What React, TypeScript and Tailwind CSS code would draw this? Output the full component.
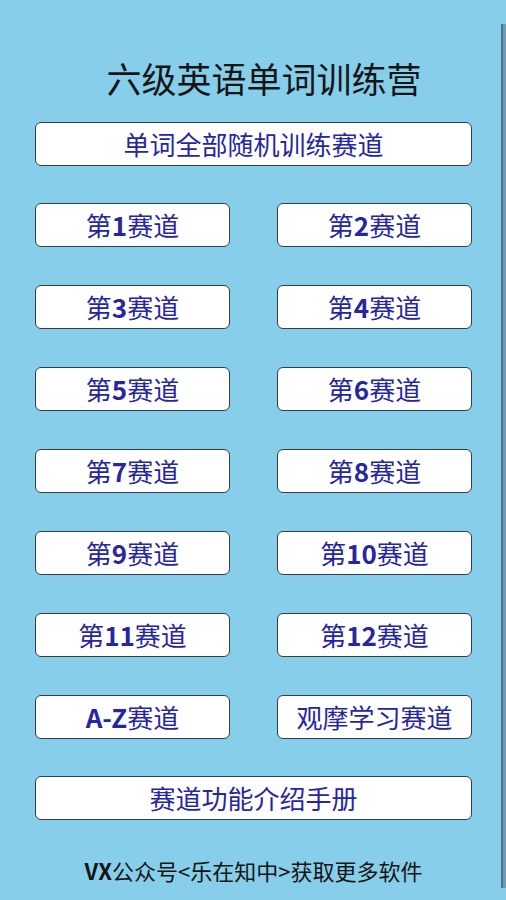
import React from "react";

const rows: [string, string][] = [
  ["第1赛道", "第2赛道"],
  ["第3赛道", "第4赛道"],
  ["第5赛道", "第6赛道"],
  ["第7赛道", "第8赛道"],
  ["第9赛道", "第10赛道"],
  ["第11赛道", "第12赛道"],
  ["A-Z赛道", "观摩学习赛道"],
];

function Label({ text }: { text: string }) {
  // latin letters and digits render heavier in the reference
  const parts = text.split(/([A-Za-z0-9-]+)/).filter(Boolean);
  return (
    <>
      {parts.map((p, i) =>
        /[A-Za-z0-9]/.test(p) ? (
          <span key={i} className="font-bold">
            {p}
          </span>
        ) : (
          <span key={i}>{p}</span>
        )
      )}
    </>
  );
}

function TrackButton({ text }: { text: string }) {
  return (
    <button className="h-[44px] w-full rounded-[6px] border-[1.5px] border-[#333d4b] bg-white text-[26px] leading-none text-[#2626a2]">
      <Label text={text} />
    </button>
  );
}

export default function App() {
  return (
    <div
      className="flex h-[900px] w-[506px] bg-[#87ceeb]"
      style={{ fontFamily: '"Noto Sans CJK SC", "Noto Sans", sans-serif' }}
    >
      <main className="flex flex-1 flex-col pl-[35px] pr-[29px] pt-[60px]">
        <h1 className="pl-[21px] text-center text-[35px] leading-none text-[#151515]">
          六级英语单词训练营
        </h1>
        <div className="mt-[27px]">
          <TrackButton text="单词全部随机训练赛道" />
        </div>
        <div className="mt-[37px] grid grid-cols-2 gap-x-[47px] gap-y-[38px]">
          {rows.map(([a, b]) => (
            <React.Fragment key={a}>
              <TrackButton text={a} />
              <TrackButton text={b} />
            </React.Fragment>
          ))}
        </div>
        <div className="mt-[37px]">
          <TrackButton text="赛道功能介绍手册" />
        </div>
        <p className="mt-[39px] text-center text-[22px] leading-none text-[#141414]">
          <span className="font-bold">VX</span>公众号&lt;乐在知中&gt;获取更多软件
        </p>
      </main>
      <div className="mt-[24px] h-[864px] w-[5px] border-l-2 border-[#4f7488] bg-[#6f9cb3]" />
    </div>
  );
}
